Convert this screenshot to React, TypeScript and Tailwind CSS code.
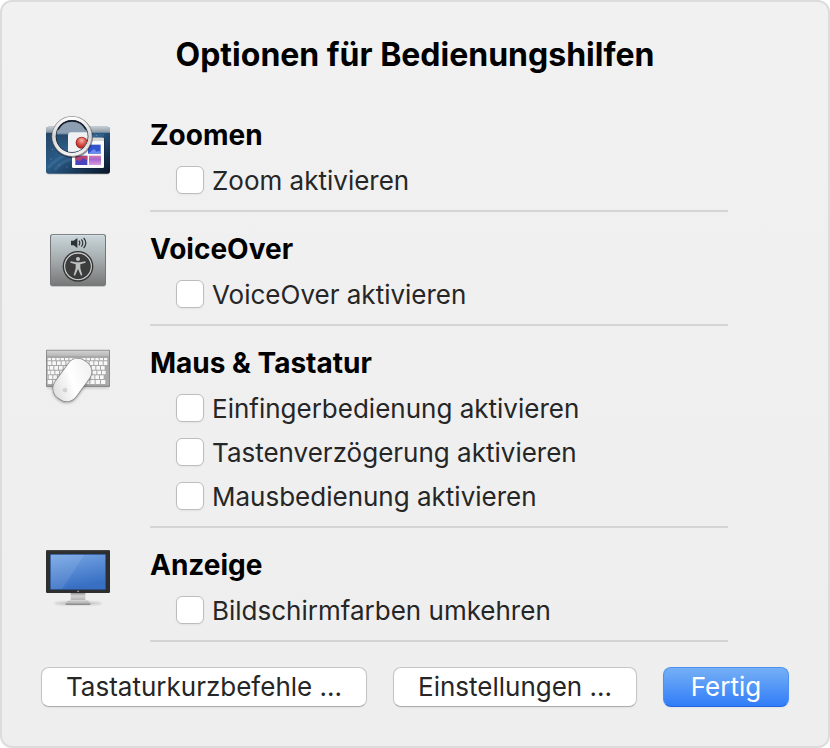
import React, { useState } from "react";

type Option = {
  id: string;
  label: string;
};

const ZoomIcon = () => (
  <svg viewBox="24 24 192 192" className="size-16" aria-hidden="true">
    <defs>
      <linearGradient id="space" x1="0" y1="0" x2="1" y2="1">
        <stop offset="0" stopColor="#22405f" />
        <stop offset="0.45" stopColor="#2a5c88" />
        <stop offset="0.75" stopColor="#173453" />
        <stop offset="1" stopColor="#0a1424" />
      </linearGradient>
      <linearGradient id="bar" x1="0" y1="0" x2="0" y2="1">
        <stop offset="0" stopColor="#c3ccd3" />
        <stop offset="1" stopColor="#8996a3" />
      </linearGradient>
      <linearGradient id="ring" x1="0" y1="0" x2="0" y2="1">
        <stop offset="0" stopColor="#ffffff" />
        <stop offset="0.5" stopColor="#d4d4d4" />
        <stop offset="1" stopColor="#f4f4f4" />
      </linearGradient>
      <linearGradient id="lens" x1="0" y1="0" x2="0" y2="1">
        <stop offset="0" stopColor="#8d9dad" />
        <stop offset="0.4" stopColor="#8ba0b3" />
        <stop offset="0.46" stopColor="#254869" />
        <stop offset="1" stopColor="#2d6491" />
      </linearGradient>
      <radialGradient id="red" cx="0.5" cy="0.3" r="0.7">
        <stop offset="0" stopColor="#f7b5ad" />
        <stop offset="0.5" stopColor="#dc5a50" />
        <stop offset="1" stopColor="#b5251f" />
      </radialGradient>
      <linearGradient id="dusk" x1="0" y1="0" x2="0" y2="1">
        <stop offset="0" stopColor="#d678b4" />
        <stop offset="0.4" stopColor="#a468cf" />
        <stop offset="1" stopColor="#dc9bdc" />
      </linearGradient>
      <clipPath id="lensClip">
        <circle cx="102" cy="85" r="47" />
      </clipPath>
    </defs>
    <rect x="24" y="58" width="192" height="142" rx="9" fill="#cfcfcf" />
    <rect x="24" y="56" width="192" height="141" rx="8" fill="url(#space)" />
    <path d="M24 74V64q0-8 8-8h176q8 0 8 8v10z" fill="url(#bar)" />
    <path d="M30 180q30-34 66-44M50 186q20-26 50-32M150 90q22-10 48-8" stroke="#5c8db5" strokeWidth="9" opacity="0.25" fill="none" />
    <g fill="#b5cfe2">
      <rect x="38" y="152" width="2" height="2" />
      <rect x="62" y="170" width="2" height="2" />
      <rect x="43" y="124" width="2" height="2" />
      <rect x="86" y="176" width="2" height="2" />
      <rect x="174" y="82" width="2" height="2" />
    </g>
    <rect x="102" y="91" width="98" height="91" rx="5" fill="#101d33" opacity="0.6" />
    <rect x="102" y="89" width="96" height="91" rx="4" fill="#fafafa" />
    <path d="M102 99v-6q0-4 4-4h88q4 0 4 4v6z" fill="#d6d6d6" />
    <rect x="150" y="110" width="38" height="27" fill="#3154ce" />
    <path d="M152 136l16-13 8 8 8-3 4 6v3z" fill="#6d8aef" />
    <rect x="112" y="143" width="36" height="28" fill="#4a43bd" />
    <path d="M112 144h36v14l-12-8-10 9-14-4z" fill="#b94275" />
    <rect x="153" y="143" width="36" height="28" fill="url(#dusk)" />
    <circle cx="103" cy="88" r="62" fill="#111" opacity="0.45" />
    <circle cx="102" cy="85" r="61" fill="#8d8d8d" />
    <circle cx="102" cy="85" r="59" fill="url(#ring)" />
    <circle cx="102" cy="85" r="49" fill="#111d2d" />
    <g clipPath="url(#lensClip)">
      <rect x="54" y="37" width="96" height="96" fill="url(#lens)" />
      <path d="M90 140V83q0-10 10-10h60v70z" fill="#f0f1f3" />
      <circle cx="131" cy="104" r="18" fill="#8e1f1c" />
      <circle cx="131" cy="104" r="16" fill="url(#red)" />
    </g>
    <path d="M60 65a47 47 0 0 1 84 0" stroke="#131e2d" strokeWidth="4" fill="none" />
  </svg>
);

const VoiceOverIcon = () => (
  <svg viewBox="24 15 192 192" className="size-16" aria-hidden="true">
    <defs>
      <linearGradient id="plate" x1="0" y1="0" x2="0" y2="1">
        <stop offset="0" stopColor="#c9d6da" />
        <stop offset="0.5" stopColor="#a5abad" />
        <stop offset="1" stopColor="#787878" />
      </linearGradient>
    </defs>
    <rect x="36" y="30" width="168" height="156" rx="8" fill="#c9c9c9" />
    <rect x="36" y="27" width="168" height="156" rx="8" fill="#737779" />
    <rect x="39" y="30" width="162" height="150" rx="6" fill="url(#plate)" />
    <path d="M42 31h156" stroke="#e2eaed" strokeWidth="2" />
    <path d="M99 47h8l11-8v30l-11-8h-8z" fill="#2d3235" />
    <path d="M123 47q5 7 0 14M130 43q9 11 0 22M137 39q13 15 0 30" stroke="#2d3235" strokeWidth="3.5" fill="none" />
    <circle cx="120" cy="124" r="46" fill="#343434" />
    <circle cx="120" cy="124" r="40" fill="none" stroke="#c5c8c9" strokeWidth="4" />
    <circle cx="120" cy="124" r="37" fill="#3c3c3c" />
    <circle cx="120" cy="102" r="6" fill="#c4c7c8" />
    <path d="M98 109l16 3h12l16-3 1 4-16 5v12l6 20-4 2-9-20-9 20-4-2 6-20v-12l-16-5z" fill="#bcc0c1" />
  </svg>
);

const keyRows = [
  { y: 54, h: 7, start: 29, step: 13 },
  { y: 64, h: 11, start: 29, step: 14 },
  { y: 78, h: 11, start: 35, step: 14 },
  { y: 92, h: 11, start: 38, step: 14 },
  { y: 106, h: 11, start: 32, step: 14 },
  { y: 120, h: 12, start: 29, step: 16 },
];

const KeyboardIcon = () => (
  <svg viewBox="24 12 192 192" className="size-16" aria-hidden="true">
    <defs>
      <linearGradient id="alu" x1="0" y1="0" x2="0" y2="1">
        <stop offset="0" stopColor="#d2d2d2" />
        <stop offset="1" stopColor="#b4b4b4" />
      </linearGradient>
      <linearGradient id="mouse" x1="0.7" y1="0" x2="0.3" y2="1">
        <stop offset="0" stopColor="#f1f1f1" />
        <stop offset="0.5" stopColor="#ffffff" />
        <stop offset="1" stopColor="#dfdfdf" />
      </linearGradient>
      <filter id="soft" x="-20%" y="-20%" width="140%" height="140%">
        <feGaussianBlur stdDeviation="4" />
      </filter>
    </defs>
    <rect x="27" y="132" width="186" height="14" fill="#aaa" opacity="0.5" filter="url(#soft)" />
    <rect x="24" y="29" width="192" height="112" rx="2" fill="#8b8b8b" />
    <rect x="27" y="32" width="186" height="18" fill="url(#alu)" />
    <rect x="27" y="51" width="186" height="86" fill="#a9a9a9" />
    {keyRows.map((row) => (
      <g key={row.y} fill="#f7f7f7">
        {row.start > 29 && <rect x="29" y={row.y} width={row.start - 31} height={row.h} />}
        {Array.from({ length: Math.floor((211 - row.start) / row.step) }).map((_, i) => (
          <rect key={i} x={row.start + i * row.step} y={row.y} width={row.step - 3} height={row.h} rx="1" />
        ))}
      </g>
    ))}
    <rect x="77" y="120" width="66" height="12" fill="#f7f7f7" />
    <g transform="rotate(36 103 120)">
      <rect x="65" y="58" width="79" height="134" rx="36" fill="#333" opacity="0.5" filter="url(#soft)" />
      <rect x="63" y="50" width="80" height="140" rx="36" fill="#888" />
      <rect x="65" y="52" width="76" height="136" rx="34" fill="url(#mouse)" />
    </g>
    <path d="M82 143q3-1 3-4-4 1-3 4zm-5 2q4-1 5 0 4-2 6 1-3 3 0 6-3 6-6 5-2-1-4 0-6-3-4-9 0-2 3-3z" fill="#d2d2d2" />
  </svg>
);

const DisplayIcon = () => (
  <svg viewBox="24 12 192 192" className="size-16" aria-hidden="true">
    <defs>
      <linearGradient id="screen" x1="0" y1="0" x2="0.3" y2="1">
        <stop offset="0" stopColor="#78a7e6" />
        <stop offset="1" stopColor="#386fc3" />
      </linearGradient>
      <linearGradient id="stand" x1="0" y1="0" x2="0" y2="1">
        <stop offset="0" stopColor="#898989" />
        <stop offset="0.4" stopColor="#d3d3d3" />
        <stop offset="1" stopColor="#aaaaaa" />
      </linearGradient>
      <filter id="shade" x="-20%" y="-100%" width="140%" height="300%">
        <feGaussianBlur stdDeviation="3" />
      </filter>
    </defs>
    <ellipse cx="120" cy="184" rx="72" ry="5" fill="#888" opacity="0.45" filter="url(#shade)" />
    <rect x="98" y="151" width="44" height="27" fill="url(#stand)" />
    <path d="M90 176h60l7 8v3H83v-3z" fill="#bdbdbd" />
    <path d="M83 185h74v3H83z" fill="#707070" />
    <path d="M98 176h44" stroke="#eee" strokeWidth="2" />
    <rect x="24" y="24" width="192" height="129" rx="4" fill="#2d2e2f" />
    <path d="M26 26h188" stroke="#555" strokeWidth="2" />
    <rect x="36" y="36" width="168" height="107" fill="#23487f" />
    <rect x="38" y="38" width="164" height="104" fill="url(#screen)" />
    <path d="M38 38h101L72 142H38z" fill="#fff" opacity="0.09" />
    <rect x="118" y="146" width="5" height="4" fill="#9b9b9b" />
  </svg>
);

const Section = ({
  title,
  icon,
  options,
  checked,
  onToggle,
}: {
  title: string;
  icon: React.ReactNode;
  options: Option[];
  checked: string[];
  onToggle: (id: string) => void;
}) => {
  return (
    <section className="flex gap-10">
      <div className="w-16 shrink-0">{icon}</div>
      <div className="grow border-b-2 border-[#d4d4d4] pb-2">
        <h2 className="mb-1 text-[28px] leading-[38px] font-bold text-black">{title}</h2>
        {options.map((option) => (
          <div key={option.id} className="flex h-11 items-center pl-[26px]">
            <input
              type="checkbox"
              id={option.id}
              checked={checked.includes(option.id)}
              onChange={() => onToggle(option.id)}
              className="size-7 shrink-0 appearance-none rounded-md border border-[#bdbdbd] bg-white shadow-xs checked:border-[#2f7bf6] checked:bg-[#3b88fd]"
            />
            <label htmlFor={option.id} className="pt-0.5 pl-2 text-[26px] leading-8">
              {option.label}
            </label>
          </div>
        ))}
      </div>
    </section>
  );
};

const sections = [
  {
    title: "Zoomen",
    icon: <ZoomIcon />,
    options: [{ id: "zoom", label: "Zoom aktivieren" }],
  },
  {
    title: "VoiceOver",
    icon: <VoiceOverIcon />,
    options: [{ id: "voiceover", label: "VoiceOver aktivieren" }],
  },
  {
    title: "Maus & Tastatur",
    icon: <KeyboardIcon />,
    options: [
      { id: "sticky", label: "Einfingerbedienung aktivieren" },
      { id: "slow", label: "Tastenverzögerung aktivieren" },
      { id: "mouse-keys", label: "Mausbedienung aktivieren" },
    ],
  },
  {
    title: "Anzeige",
    icon: <DisplayIcon />,
    options: [{ id: "invert", label: "Bildschirmfarben umkehren" }],
  },
];

export default function App() {
  const [checked, setChecked] = useState<string[]>([]);

  const toggle = (id: string) => {
    setChecked(checked.includes(id) ? checked.filter((item) => item !== id) : [...checked, id]);
  };

  const plainButton = "h-10 rounded-lg border border-[#c6c6c6] border-b-[#acacac] bg-white shadow-xs";

  return (
    <main className="rounded-xl border-2 border-[#dcdcdc] bg-linear-to-b from-[#f1f1f1] to-[#eeeeee] pt-[33px] pb-[39px] font-['Inter','Liberation_Sans',sans-serif] text-[#262626]">
      <h1 className="text-center text-[32px] leading-10 font-bold text-black">Optionen für Bedienungshilfen</h1>
      <div className="mt-[41px] mr-[100px] ml-11 flex flex-col gap-[18px]">
        {sections.map((section) => (
          <Section key={section.title} {...section} checked={checked} onToggle={toggle} />
        ))}
      </div>
      <div className="mx-[39px] mt-[25px] grid grid-cols-[326fr_244fr_126fr] gap-[26px] text-[26px] leading-8">
        <button type="button" className={plainButton}>
          Tastaturkurzbefehle ...
        </button>
        <button type="button" className={plainButton}>
          Einstellungen ...
        </button>
        <button
          type="button"
          className="h-10 rounded-lg border border-[#4b91f3] border-b-[#2463e8] bg-linear-to-b from-[#75aff5] to-[#317cf8] text-white shadow-xs"
        >
          Fertig
        </button>
      </div>
    </main>
  );
}
